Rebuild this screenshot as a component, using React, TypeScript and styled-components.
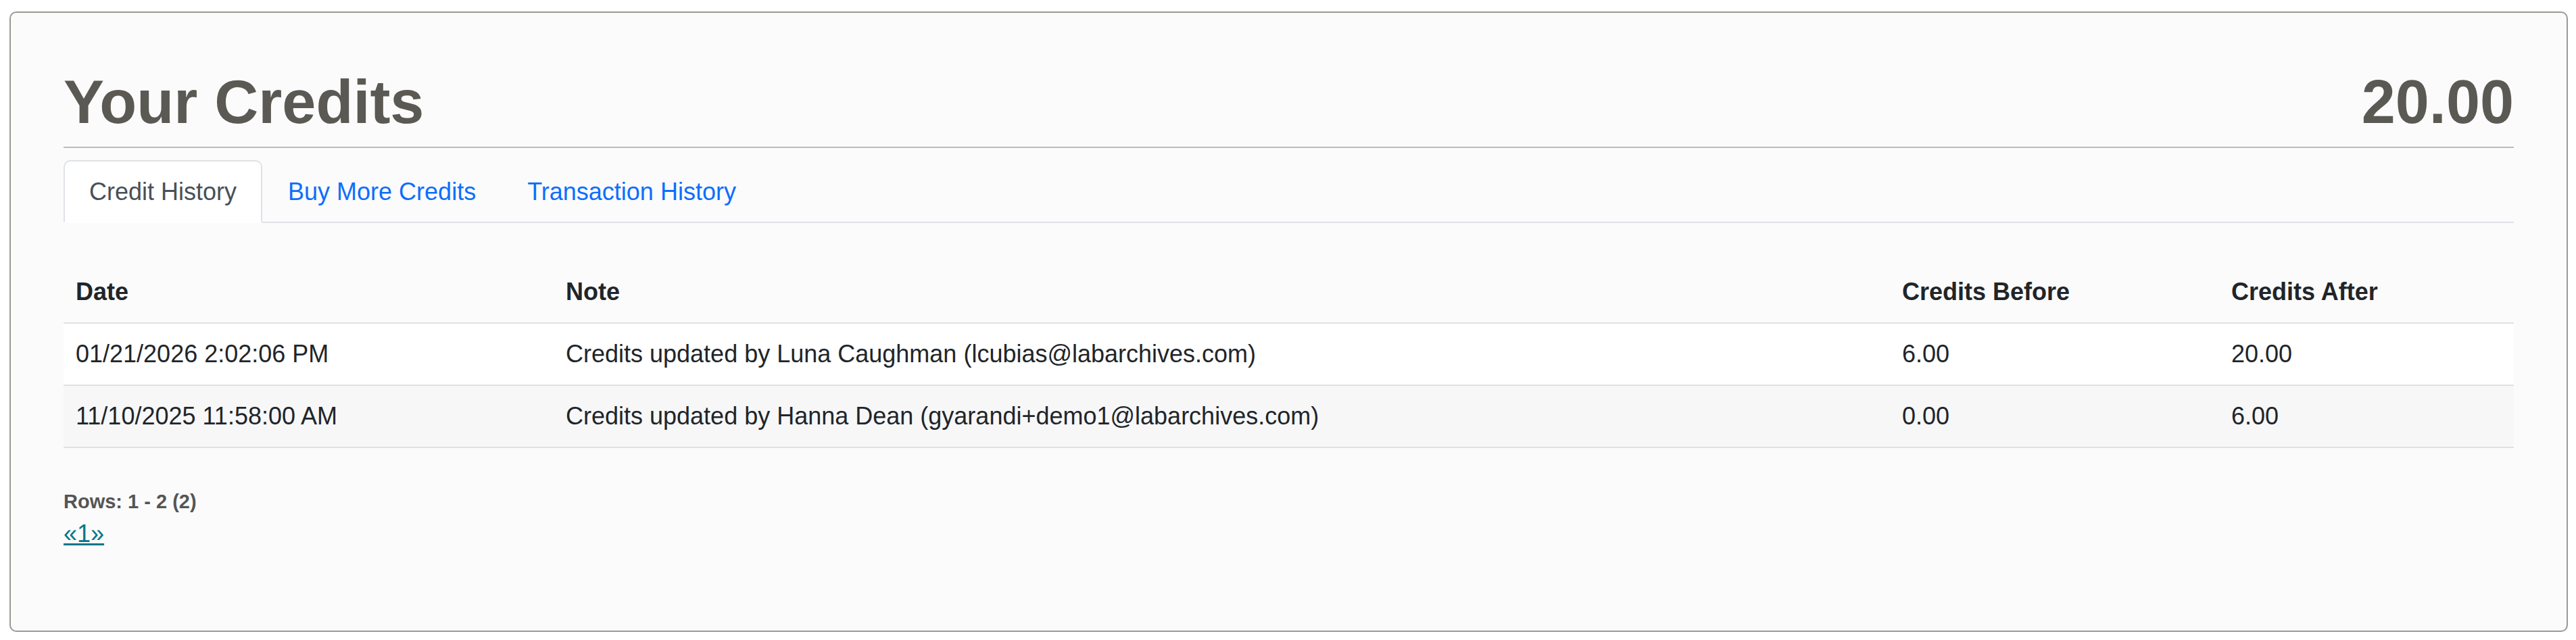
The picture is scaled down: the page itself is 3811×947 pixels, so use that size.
import React from "react";
import styled, { createGlobalStyle } from "styled-components";

const GlobalStyle = createGlobalStyle`
  html, body {
    margin: 0;
    padding: 0;
    background: #ffffff;
    font-family: "Liberation Sans", Arial, Helvetica, sans-serif;
  }
  * { box-sizing: border-box; }
`;

const Panel = styled.section`
  margin: 17px 12px 12px 14px;
  border: 2px solid #9a9a92;
  border-radius: 10px;
  background: #fbfbfb;
  padding: 78px 78px 116px;
`;

const Header = styled.header`
  display: flex;
  justify-content: space-between;
  align-items: baseline;
  padding-bottom: 12px;
  border-bottom: 2px solid #bbbbbb;
`;

const Title = styled.h1`
  margin: 0;
  font-size: 90px;
  line-height: 108px;
  font-weight: 700;
  color: #5a5954;
`;

const Balance = styled.span`
  font-size: 90px;
  line-height: 108px;
  font-weight: 700;
  color: #5a5954;
`;

const TabList = styled.nav`
  display: flex;
  margin-top: 18px;
  border-bottom: 2px solid #dee2e6;
`;

const Tab = styled.a<{ $active?: boolean }>`
  display: block;
  margin-bottom: -2px;
  padding: 18px 36px 17px;
  font-size: 36px;
  line-height: 54px;
  text-decoration: none;
  border: 2px solid ${(p) => (p.$active ? "#dee2e6" : "transparent")};
  border-bottom-color: ${(p) => (p.$active ? "#ffffff" : "transparent")};
  border-radius: 10px 10px 0 0;
  background: ${(p) => (p.$active ? "#ffffff" : "transparent")};
  color: ${(p) => (p.$active ? "#495057" : "#0d6efd")};
  cursor: pointer;
`;

const Table = styled.table`
  width: 100%;
  margin-top: 57px;
  border-collapse: collapse;
  table-layout: fixed;
  color: #212529;
  font-size: 36px;
  line-height: 54px;
`;

const HeadCell = styled.th`
  text-align: left;
  font-weight: 700;
  padding: 18px 18px;
  border-bottom: 2px solid #dee2e6;
`;

const Row = styled.tr<{ $striped?: boolean }>`
  background: ${(p) => (p.$striped ? "#f7f7f8" : "#ffffff")};
`;

const Cell = styled.td`
  padding: 18px 18px;
  border-bottom: 2px solid #dee2e6;
  white-space: nowrap;
`;

const RowsInfo = styled.div`
  margin-top: 58px;
  font-size: 29px;
  line-height: 42px;
  font-weight: 700;
  color: #555555;
`;

const Pager = styled.div`
  font-size: 36px;
  line-height: 54px;
`;

const PageLink = styled.a`
  color: #00778b;
  text-decoration: underline;
  cursor: pointer;
`;

const columns = [
  { label: "Date", width: 725 },
  { label: "Note", width: 1977 },
  { label: "Credits Before", width: 487 },
  { label: "Credits After", width: 436 },
];

const rows = [
  {
    date: "01/21/2026 2:02:06 PM",
    note: "Credits updated by Luna Caughman (lcubias@labarchives.com)",
    before: "6.00",
    after: "20.00",
  },
  {
    date: "11/10/2025 11:58:00 AM",
    note: "Credits updated by Hanna Dean (gyarandi+demo1@labarchives.com)",
    before: "0.00",
    after: "6.00",
  },
];

export default function App() {
  return (
    <>
      <GlobalStyle />
      <Panel>
        <Header>
          <Title>Your Credits</Title>
          <Balance>20.00</Balance>
        </Header>
        <TabList>
          <Tab $active>Credit History</Tab>
          <Tab>Buy More Credits</Tab>
          <Tab>Transaction History</Tab>
        </TabList>
        <Table>
          <colgroup>
            {columns.map((c) => (
              <col key={c.label} style={{ width: c.width }} />
            ))}
          </colgroup>
          <thead>
            <tr>
              {columns.map((c) => (
                <HeadCell key={c.label}>{c.label}</HeadCell>
              ))}
            </tr>
          </thead>
          <tbody>
            {rows.map((r, i) => (
              <Row key={r.date} $striped={i % 2 === 1}>
                <Cell>{r.date}</Cell>
                <Cell>{r.note}</Cell>
                <Cell>{r.before}</Cell>
                <Cell>{r.after}</Cell>
              </Row>
            ))}
          </tbody>
        </Table>
        <RowsInfo>Rows: 1 - 2 (2)</RowsInfo>
        <Pager>
          <PageLink>«1»</PageLink>
        </Pager>
      </Panel>
    </>
  );
}
